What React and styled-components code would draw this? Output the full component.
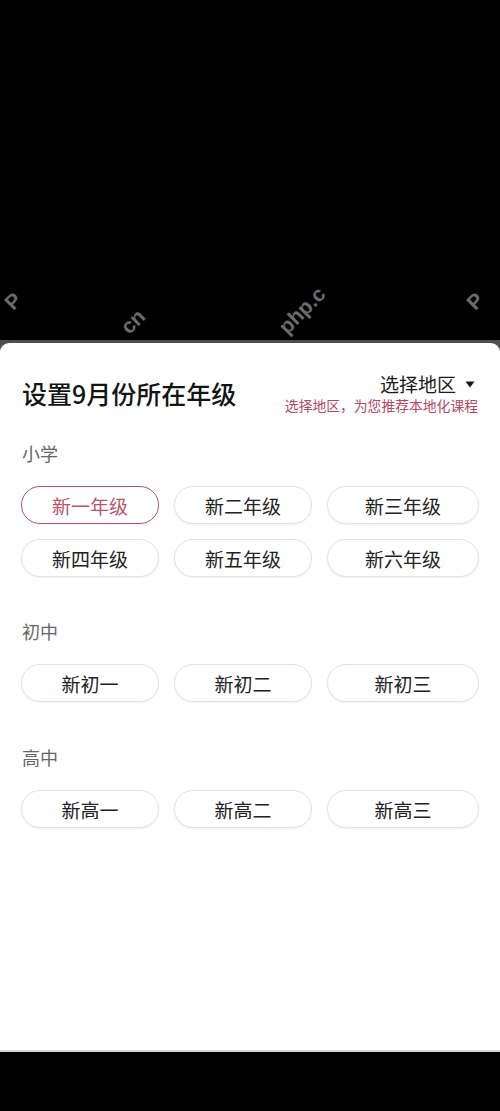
import React from "react";
import styled, { createGlobalStyle } from "styled-components";

const GlobalStyle = createGlobalStyle`
  html, body { margin: 0; padding: 0; background: #000; }
  body { font-family: "Noto Sans CJK SC", "Noto Sans", sans-serif; }
  #root { width: 500px; height: 1111px; display: flex; flex-direction: column; }
`;

const TopArea = styled.div`
  position: relative;
  height: 340px;
  background: #000;
  overflow: hidden;
  flex: none;
`;

const Mark = styled.span`
  position: absolute;
  left: ${(p) => p.$x}px;
  top: ${(p) => p.$y}px;
  font-family: "Liberation Sans", sans-serif;
  font-weight: 700;
  font-size: 21px;
  line-height: 22px;
  color: #6c6c6c;
  transform: rotate(-45deg);
  transform-origin: left bottom;
  white-space: nowrap;
`;

const Band = styled.div`
  height: 3px;
  background: #4e4e4e;
  flex: none;
`;

const SheetBack = styled.div`
  background: #4e4e4e;
  flex: none;
`;

const Sheet = styled.div`
  background: #fff;
  border-radius: 9px 9px 0 0;
  height: 707px;
  box-sizing: border-box;
  padding: 29px 21px 0 21px;
  display: flex;
  flex-direction: column;
`;

const BottomLine = styled.div`
  height: 2px;
  background: #d4d4d4;
  flex: none;
`;

const Header = styled.div`
  display: flex;
  justify-content: space-between;
  align-items: center;
`;

const Title = styled.div`
  font-size: 25px;
  line-height: 30px;
  font-weight: 500;
  color: #141414;
  padding-left: 1px;
`;

const RegionBox = styled.div`
  display: flex;
  flex-direction: column;
  align-items: flex-end;
`;

const RegionSelect = styled.div`
  display: flex;
  align-items: center;
  gap: 9px;
  font-size: 19px;
  line-height: 24px;
  color: #1a1a1a;
  padding-right: 4px;
`;

const RegionHint = styled.div`
  font-size: 13.8px;
  line-height: 18px;
  color: #b04a63;
  margin-right: 1px;
`;

const Section = styled.div`
  display: flex;
  flex-direction: column;
  margin-top: ${(p) => p.$top}px;
`;

const SectionLabel = styled.div`
  font-size: 18px;
  line-height: 24px;
  color: #666;
  padding-left: 1px;
  margin-bottom: 21px;
`;

const Grid = styled.div`
  display: grid;
  grid-template-columns: 138px 138px 1fr;
  column-gap: 15px;
  row-gap: 15px;
`;

const GradeButton = styled.div`
  height: 38px;
  box-sizing: border-box;
  border-radius: 19px;
  border: 1.5px solid ${(p) => (p.$active ? "#a8586a" : "#e2e2e2")};
  box-shadow: 0 1px 2px rgba(0, 0, 0, 0.06);
  display: flex;
  align-items: center;
  justify-content: center;
  font-size: 19px;
  color: ${(p) => (p.$active ? "#b8546c" : "#222")};
  background: #fff;
`;

const Caret = () => (
  <svg width="10" height="7" viewBox="0 0 10 7">
    <path d="M0.5 0.5 L9.5 0.5 L5 6.5 Z" fill="#1a1a1a" />
  </svg>
);

const sections = [
  { label: "小学", top: 27, items: ["新一年级", "新二年级", "新三年级", "新四年级", "新五年级", "新六年级"] },
  { label: "初中", top: 42, items: ["新初一", "新初二", "新初三"] },
  { label: "高中", top: 43, items: ["新高一", "新高二", "新高三"] },
];

export default function App() {
  return (
    <>
      <GlobalStyle />
      <TopArea>
        <Mark $x={16} $y={292}>P</Mark>
        <Mark $x={132} $y={316}>cn</Mark>
        <Mark $x={290} $y={316}>php.c</Mark>
        <Mark $x={478} $y={292}>P</Mark>
      </TopArea>
      <Band />
      <SheetBack>
        <Sheet>
          <Header>
            <Title>设置9月份所在年级</Title>
            <RegionBox>
              <RegionSelect>
                选择地区
                <Caret />
              </RegionSelect>
              <RegionHint>选择地区，为您推荐本地化课程</RegionHint>
            </RegionBox>
          </Header>
          {sections.map((s) => (
            <Section key={s.label} $top={s.top}>
              <SectionLabel>{s.label}</SectionLabel>
              <Grid>
                {s.items.map((it, i) => (
                  <GradeButton key={it} $active={s.label === "小学" && i === 0}>
                    {it}
                  </GradeButton>
                ))}
              </Grid>
            </Section>
          ))}
        </Sheet>
      </SheetBack>
      <BottomLine />
    </>
  );
}
